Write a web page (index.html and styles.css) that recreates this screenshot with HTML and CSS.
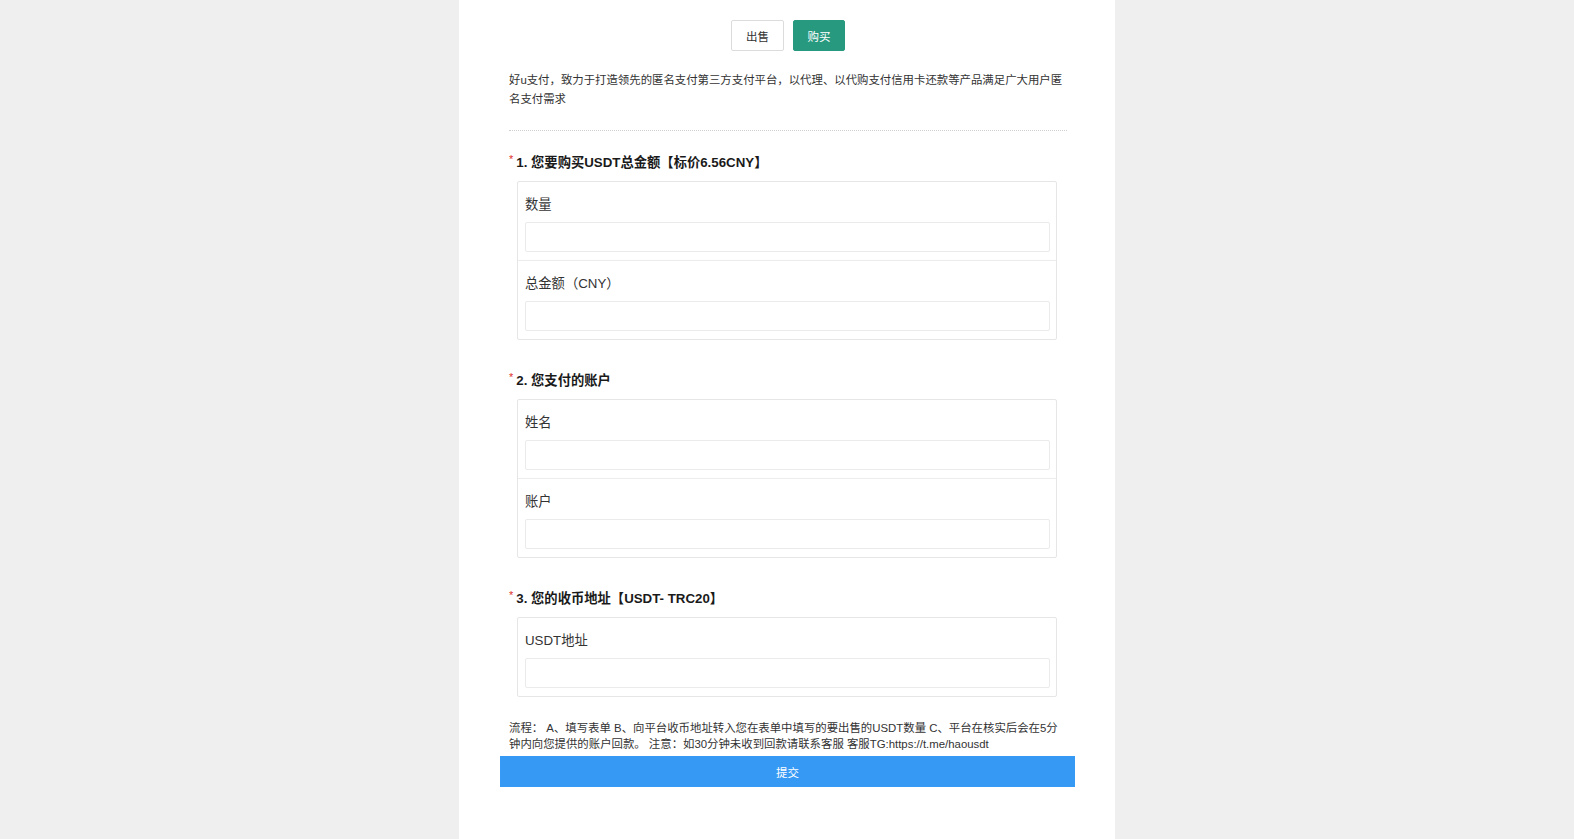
FILE: index.html
```html
<!DOCTYPE html>
<html lang="zh-CN">
<head>
<meta charset="utf-8">
<title>好u支付</title>
<link rel="stylesheet" href="styles.css">
</head>
<body>
<div class="page">
  <div class="content">
    <div class="tabs">
      <button class="tab">出售</button>
      <button class="tab tab-active">购买</button>
    </div>
    <p class="intro">好u支付，致力于打造领先的匿名支付第三方支付平台，以代理、以代购支付信用卡还款等产品满足广大用户匿名支付需求</p>
    <div class="divider"></div>

    <div class="section">
      <div class="q-title"><span class="req">*</span>1. 您要购买USDT总金额【标价6.56CNY】</div>
      <div class="card">
        <div class="row">
          <div class="label">数量</div>
          <input class="field" type="text">
        </div>
        <div class="row">
          <div class="label">总金额（CNY）</div>
          <input class="field" type="text">
        </div>
      </div>
    </div>

    <div class="section">
      <div class="q-title"><span class="req">*</span>2. 您支付的账户</div>
      <div class="card">
        <div class="row">
          <div class="label">姓名</div>
          <input class="field" type="text">
        </div>
        <div class="row">
          <div class="label">账户</div>
          <input class="field" type="text">
        </div>
      </div>
    </div>

    <div class="section">
      <div class="q-title"><span class="req">*</span>3. 您的收币地址【USDT- TRC20】</div>
      <div class="card">
        <div class="row">
          <div class="label">USDT地址</div>
          <input class="field" type="text">
        </div>
      </div>
    </div>

    <p class="note">流程： A、填写表单 B、向平台收币地址转入您在表单中填写的要出售的USDT数量 C、平台在核实后会在5分钟内向您提供的账户回款。 注意：如30分钟未收到回款请联系客服 客服TG:https://t.me/haousdt</p>
    <button class="submit">提交</button>
  </div>
</div>
</body>
</html>
```

FILE: styles.css
```css
html, body {
  margin: 0;
  padding: 0;
  background: #efefef;
  font-family: "Liberation Sans", Arial, "Noto Sans CJK SC", sans-serif;
  color: #333;
}

.page {
  width: 656px;
  margin: 0 auto;
  min-height: 839px;
  background: #fff;
}

.content {
  padding: 20px 48px 40px 50px;
}

.tabs {
  display: flex;
  justify-content: center;
  gap: 9px;
}

.tab {
  width: 53px;
  height: 31px;
  padding: 0;
  border: 1px solid #dcdcdc;
  border-radius: 2px;
  background: #fff;
  color: #333;
  font-family: inherit;
  font-size: 11.5px;
}

.tab-active {
  width: 52px;
  background: #26997f;
  border-color: #26997f;
  color: #fff;
}

.intro {
  margin: 20px 0 0;
  font-size: 11.4px;
  line-height: 19px;
  color: #333;
}

.divider {
  margin-top: 21px;
  border-top: 1px dotted #cfcfcf;
}

.section {
  margin-top: 22px;
}

.section + .section {
  margin-top: 31px;
}

.q-title {
  font-size: 13.3px;
  font-weight: bold;
  line-height: 20px;
  color: #1a1a1a;
}

.req {
  color: #e0302c;
  font-weight: normal;
  font-size: 11px;
  vertical-align: top;
  line-height: 13px;
  margin-right: 3px;
}

.card {
  margin: 8px 10px 0 8px;
  border: 1px solid #e6e6e6;
  border-radius: 2px;
}

.row {
  padding: 13px 6px 8px 7px;
}

.row + .row {
  border-top: 1px solid #ececec;
}

.label {
  font-size: 13.3px;
  line-height: 20px;
  color: #333;
}

.field {
  display: block;
  box-sizing: border-box;
  width: 100%;
  height: 30px;
  margin-top: 7px;
  border: 1px solid #ebebeb;
  border-radius: 2px;
  background: #fff;
  outline: none;
}

.note {
  margin: 23px 0 0;
  font-size: 11.4px;
  line-height: 16px;
  color: #333;
}

.submit {
  display: block;
  width: 575px;
  height: 31px;
  margin: 4px 0 0 -9px;
  border: none;
  background: #3699f4;
  color: #fff;
  font-family: inherit;
  font-size: 11.5px;
}
```
